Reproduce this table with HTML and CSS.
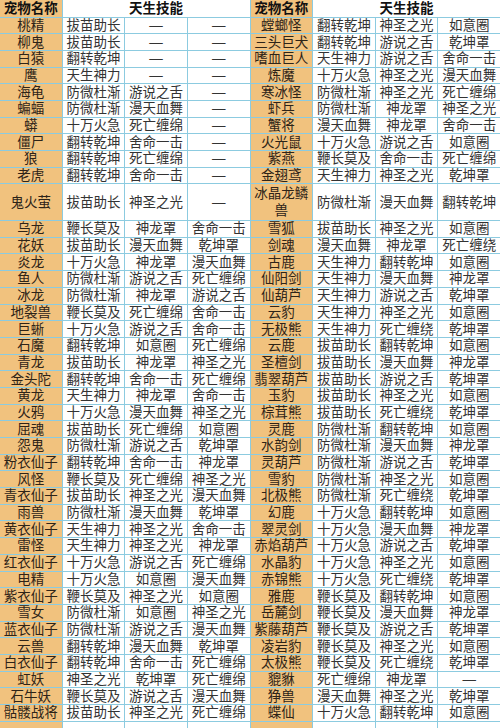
FILE: index.html
```html
<!DOCTYPE html>
<html lang="zh-CN">
<head>
<meta charset="utf-8">
<title>宠物天生技能</title>
<link rel="stylesheet" href="styles.css">
</head>
<body>
<div class="pets">
<div class="c n h">宠物名称</div><div class="c h span3">天生技能</div><div class="c n h">宠物名称</div><div class="c h span3">天生技能</div>

<div class="c n">桃精</div><div class="c">拔苗助长</div><div class="c">—</div><div class="c">—</div><div class="c n">螳螂怪</div><div class="c">翻转乾坤</div><div class="c">神圣之光</div><div class="c">如意圈</div>
<div class="c n">柳鬼</div><div class="c">拔苗助长</div><div class="c">—</div><div class="c">—</div><div class="c n">三头巨犬</div><div class="c">翻转乾坤</div><div class="c">游说之舌</div><div class="c">乾坤罩</div>
<div class="c n">白猿</div><div class="c">翻转乾坤</div><div class="c">—</div><div class="c">—</div><div class="c n">嗜血巨人</div><div class="c">天生神力</div><div class="c">游说之舌</div><div class="c">舍命一击</div>
<div class="c n">鹰</div><div class="c">天生神力</div><div class="c">—</div><div class="c">—</div><div class="c n">炼魔</div><div class="c">十万火急</div><div class="c">神圣之光</div><div class="c">漫天血舞</div>
<div class="c n">海龟</div><div class="c">防微杜渐</div><div class="c">游说之舌</div><div class="c">—</div><div class="c n">寒冰怪</div><div class="c">防微杜渐</div><div class="c">神圣之光</div><div class="c">死亡缠绵</div>
<div class="c n">蝙蝠</div><div class="c">防微杜渐</div><div class="c">漫天血舞</div><div class="c">—</div><div class="c n">虾兵</div><div class="c">防微杜渐</div><div class="c">神龙罩</div><div class="c">神圣之光</div>
<div class="c n">蟒</div><div class="c">十万火急</div><div class="c">死亡缠绵</div><div class="c">—</div><div class="c n">蟹将</div><div class="c">漫天血舞</div><div class="c">神龙罩</div><div class="c">舍命一击</div>
<div class="c n">僵尸</div><div class="c">翻转乾坤</div><div class="c">舍命一击</div><div class="c">—</div><div class="c n">火光鼠</div><div class="c">十万火急</div><div class="c">游说之舌</div><div class="c">如意圈</div>
<div class="c n">狼</div><div class="c">翻转乾坤</div><div class="c">死亡缠绵</div><div class="c">—</div><div class="c n">紫燕</div><div class="c">鞭长莫及</div><div class="c">舍命一击</div><div class="c">死亡缠绵</div>
<div class="c n">老虎</div><div class="c">翻转乾坤</div><div class="c">舍命一击</div><div class="c">—</div><div class="c n">金翅鸢</div><div class="c">天生神力</div><div class="c">神圣之光</div><div class="c">乾坤罩</div>
<div class="c n">鬼火萤</div><div class="c">拔苗助长</div><div class="c">神圣之光</div><div class="c">—</div><div class="c n wrap">冰晶龙鳞兽</div><div class="c">防微杜渐</div><div class="c">漫天血舞</div><div class="c">翻转乾坤</div>
<div class="c n">乌龙</div><div class="c">鞭长莫及</div><div class="c">神龙罩</div><div class="c">舍命一击</div><div class="c n">雪狐</div><div class="c">拔苗助长</div><div class="c">神圣之光</div><div class="c">如意圈</div>
<div class="c n">花妖</div><div class="c">拔苗助长</div><div class="c">漫天血舞</div><div class="c">乾坤罩</div><div class="c n">剑魂</div><div class="c">漫天血舞</div><div class="c">神龙罩</div><div class="c">死亡缠绕</div>
<div class="c n">炎龙</div><div class="c">十万火急</div><div class="c">神龙罩</div><div class="c">漫天血舞</div><div class="c n">古鹿</div><div class="c">天生神力</div><div class="c">翻转乾坤</div><div class="c">如意圈</div>
<div class="c n">鱼人</div><div class="c">防微杜渐</div><div class="c">游说之舌</div><div class="c">死亡缠绵</div><div class="c n">仙阳剑</div><div class="c">天生神力</div><div class="c">漫天血舞</div><div class="c">神龙罩</div>
<div class="c n">冰龙</div><div class="c">防微杜渐</div><div class="c">神龙罩</div><div class="c">游说之舌</div><div class="c n">仙葫芦</div><div class="c">天生神力</div><div class="c">游说之舌</div><div class="c">乾坤罩</div>
<div class="c n">地裂兽</div><div class="c">鞭长莫及</div><div class="c">死亡缠绵</div><div class="c">舍命一击</div><div class="c n">云豹</div><div class="c">天生神力</div><div class="c">神圣之光</div><div class="c">如意圈</div>
<div class="c n">巨蜥</div><div class="c">十万火急</div><div class="c">游说之舌</div><div class="c">舍命一击</div><div class="c n">无极熊</div><div class="c">天生神力</div><div class="c">死亡缠绕</div><div class="c">乾坤罩</div>
<div class="c n">石魔</div><div class="c">翻转乾坤</div><div class="c">如意圈</div><div class="c">死亡缠绵</div><div class="c n">云鹿</div><div class="c">拔苗助长</div><div class="c">翻转乾坤</div><div class="c">如意圈</div>
<div class="c n">青龙</div><div class="c">拔苗助长</div><div class="c">神龙罩</div><div class="c">神圣之光</div><div class="c n">圣檀剑</div><div class="c">拔苗助长</div><div class="c">漫天血舞</div><div class="c">神龙罩</div>
<div class="c n">金头陀</div><div class="c">翻转乾坤</div><div class="c">舍命一击</div><div class="c">死亡缠绵</div><div class="c n">翡翠葫芦</div><div class="c">拔苗助长</div><div class="c">游说之舌</div><div class="c">乾坤罩</div>
<div class="c n">黄龙</div><div class="c">天生神力</div><div class="c">神龙罩</div><div class="c">舍命一击</div><div class="c n">玉豹</div><div class="c">拔苗助长</div><div class="c">神圣之光</div><div class="c">如意圈</div>
<div class="c n">火鸦</div><div class="c">十万火急</div><div class="c">漫天血舞</div><div class="c">神圣之光</div><div class="c n">棕茸熊</div><div class="c">拔苗助长</div><div class="c">死亡缠绕</div><div class="c">乾坤罩</div>
<div class="c n">屈魂</div><div class="c">拔苗助长</div><div class="c">死亡缠绵</div><div class="c">如意圈</div><div class="c n">灵鹿</div><div class="c">防微杜渐</div><div class="c">翻转乾坤</div><div class="c">如意圈</div>
<div class="c n">怨鬼</div><div class="c">防微杜渐</div><div class="c">游说之舌</div><div class="c">乾坤罩</div><div class="c n">水韵剑</div><div class="c">防微杜渐</div><div class="c">漫天血舞</div><div class="c">神龙罩</div>
<div class="c n">粉衣仙子</div><div class="c">翻转乾坤</div><div class="c">舍命一击</div><div class="c">神龙罩</div><div class="c n">灵葫芦</div><div class="c">防微杜渐</div><div class="c">游说之舌</div><div class="c">乾坤罩</div>
<div class="c n">风怪</div><div class="c">鞭长莫及</div><div class="c">死亡缠绵</div><div class="c">神圣之光</div><div class="c n">雪豹</div><div class="c">防微杜渐</div><div class="c">神圣之光</div><div class="c">如意圈</div>
<div class="c n">青衣仙子</div><div class="c">拔苗助长</div><div class="c">神圣之光</div><div class="c">漫天血舞</div><div class="c n">北极熊</div><div class="c">防微杜渐</div><div class="c">死亡缠绕</div><div class="c">乾坤罩</div>
<div class="c n">雨兽</div><div class="c">防微杜渐</div><div class="c">漫天血舞</div><div class="c">乾坤罩</div><div class="c n">幻鹿</div><div class="c">十万火急</div><div class="c">翻转乾坤</div><div class="c">如意圈</div>
<div class="c n">黄衣仙子</div><div class="c">天生神力</div><div class="c">神圣之光</div><div class="c">舍命一击</div><div class="c n">翠灵剑</div><div class="c">十万火急</div><div class="c">漫天血舞</div><div class="c">神龙罩</div>
<div class="c n">雷怪</div><div class="c">天生神力</div><div class="c">神圣之光</div><div class="c">神龙罩</div><div class="c n">赤焰葫芦</div><div class="c">十万火急</div><div class="c">游说之舌</div><div class="c">乾坤罩</div>
<div class="c n">红衣仙子</div><div class="c">十万火急</div><div class="c">游说之舌</div><div class="c">死亡缠绵</div><div class="c n">水晶豹</div><div class="c">十万火急</div><div class="c">神圣之光</div><div class="c">如意圈</div>
<div class="c n">电精</div><div class="c">十万火急</div><div class="c">如意圈</div><div class="c">漫天血舞</div><div class="c n">赤锦熊</div><div class="c">十万火急</div><div class="c">死亡缠绕</div><div class="c">乾坤罩</div>
<div class="c n">紫衣仙子</div><div class="c">鞭长莫及</div><div class="c">神圣之光</div><div class="c">如意圈</div><div class="c n">雅鹿</div><div class="c">鞭长莫及</div><div class="c">翻转乾坤</div><div class="c">如意圈</div>
<div class="c n">雪女</div><div class="c">防微杜渐</div><div class="c">如意圈</div><div class="c">神圣之光</div><div class="c n">岳麓剑</div><div class="c">鞭长莫及</div><div class="c">漫天血舞</div><div class="c">神龙罩</div>
<div class="c n">蓝衣仙子</div><div class="c">防微杜渐</div><div class="c">游说之舌</div><div class="c">漫天血舞</div><div class="c n">紫藤葫芦</div><div class="c">鞭长莫及</div><div class="c">游说之舌</div><div class="c">乾坤罩</div>
<div class="c n">云兽</div><div class="c">翻转乾坤</div><div class="c">漫天血舞</div><div class="c">乾坤罩</div><div class="c n">凌岩豹</div><div class="c">鞭长莫及</div><div class="c">神圣之光</div><div class="c">如意圈</div>
<div class="c n">白衣仙子</div><div class="c">翻转乾坤</div><div class="c">舍命一击</div><div class="c">死亡缠绵</div><div class="c n">太极熊</div><div class="c">鞭长莫及</div><div class="c">死亡缠绕</div><div class="c">乾坤罩</div>
<div class="c n">虹妖</div><div class="c">神圣之光</div><div class="c">乾坤罩</div><div class="c">死亡缠绵</div><div class="c n">貔貅</div><div class="c">死亡缠绵</div><div class="c">神龙罩</div><div class="c">—</div>
<div class="c n">石牛妖</div><div class="c">鞭长莫及</div><div class="c">游说之舌</div><div class="c">漫天血舞</div><div class="c n">狰兽</div><div class="c">漫天血舞</div><div class="c">神圣之光</div><div class="c">乾坤罩</div>
<div class="c n">骷髅战将</div><div class="c">拔苗助长</div><div class="c">神圣之光</div><div class="c">死亡缠绵</div><div class="c n">蝶仙</div><div class="c">十万火急</div><div class="c">翻转乾坤</div><div class="c">如意圈</div>
<div class="c n"></div><div class="c"></div><div class="c"></div><div class="c"></div><div class="c n"></div><div class="c"></div><div class="c"></div><div class="c"></div>
</div>
</body>
</html>
```
FILE: styles.css
```css
html, body {
  margin: 0;
  padding: 0;
  background: #ffffff;
}

.pets {
  width: 500px;
  display: grid;
  grid-template-columns: repeat(8, 1fr);
  grid-template-rows: 16.5px repeat(10, 15.7px) 35.7px repeat(31, 15.7px);
  gap: 1px;
  background: #8ccbe0;
  font-family: "Liberation Sans", "Noto Sans CJK SC", sans-serif;
  color: #333333;
}

.c {
  background: #ffffff;
  display: flex;
  align-items: center;
  justify-content: center;
  text-align: center;
  font-size: 13.5px;
  line-height: 15px;
  white-space: nowrap;
  overflow: hidden;
  min-width: 0;
}

.n {
  background: #f1c27e;
  color: #2e2418;
  font-size: 13.5px;
}

.h {
  font-weight: bold;
  font-size: 13.5px;
  color: #111111;
}

.span3 {
  grid-column: span 3;
}

.wrap {
  white-space: normal;
  line-height: 17px;
  padding: 0 2px;
}
```
